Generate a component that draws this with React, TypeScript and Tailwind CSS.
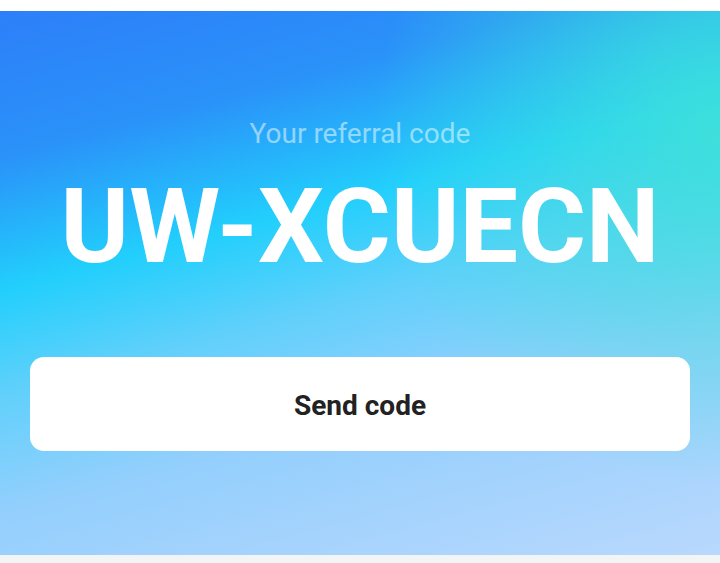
import React from "react";

export default function App() {
  return (
    <div
      className="w-[720px] h-[563px] flex flex-col bg-[#f3f4f6] overflow-hidden"
      style={{ fontFamily: "Roboto, 'Noto Sans', sans-serif" }}
    >
      <div className="h-[11px] bg-white shrink-0" />
      <div className="h-[544px] shrink-0 flex flex-col items-center pt-[109px] bg-[radial-gradient(ellipse_48%_65%_at_100%_22%,rgba(62,224,218,0.95)_0%,rgba(62,224,218,0.45)_50%,rgba(62,224,218,0)_100%),linear-gradient(165deg,#2d7ff9_0%,#2a92f9_20%,#22cffc_38%,#60d0fb_52%,#93cffd_68%,#b9d8fd_100%)]">
        <div className="text-[28px] leading-none text-white/50">
          Your referral code
        </div>
        <div className="mt-[27px] text-[104px] leading-none font-bold text-white">
          UW-XCUECN
        </div>
        <button className="mt-[78px] w-[660px] h-[94px] rounded-[14px] bg-white text-[#222222] text-[28px] font-bold pt-[3px]">
          Send code
        </button>
      </div>
      <div className="flex-1 bg-[#f3f4f6]" />
    </div>
  );
}
